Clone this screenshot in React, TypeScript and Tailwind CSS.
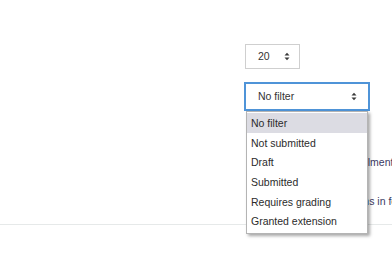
import React from "react";

const options = [
  "No filter",
  "Not submitted",
  "Draft",
  "Submitted",
  "Requires grading",
  "Granted extension",
];

function Arrows() {
  return (
    <svg width="6" height="9" viewBox="0 0 6 9" className="shrink-0">
      <path d="M0.5 3.6L3 0.8L5.5 3.6Z M0.5 5.4L3 8.2L5.5 5.4Z" fill="#3a3a3a" />
    </svg>
  );
}

export default function App() {
  return (
    <div className="relative h-[272px] w-[392px] overflow-hidden bg-white font-['Liberation_Sans',Arial,sans-serif] text-[10.5px] text-[#333]">
      <div className="pl-[245px] pt-[44px]">
        <div className="flex h-[25px] w-[55px] items-center justify-between border border-[#cfcfcf] pl-[12px] pr-[9px]">
          <span>20</span>
          <Arrows />
        </div>
      </div>

      <div className="relative ml-[244px] mt-[13px] w-[126px]">
        <div className="flex h-[29px] items-center justify-between border-2 border-[#4f94d8] pl-[12px] pr-[11px]">
          <span>No filter</span>
          <Arrows />
        </div>
        <ul className="absolute left-[2px] top-[29px] z-10 w-[122px] border border-[#b4b4b4] bg-white pt-[1px] pb-[2px] shadow-[2px_2px_3px_rgba(0,0,0,0.35)]">
          {options.map((o, i) => (
            <li
              key={o}
              className={`flex h-[19.7px] items-center pl-[4px] pt-[2px] text-[#2b2b2b] ${
                i === 0 ? "bg-[#dcdce3]" : ""
              }`}
            >
              {o}
            </li>
          ))}
        </ul>
      </div>

      <div className="mt-[41px] whitespace-nowrap text-[#3b3a63]">
        <div className="ml-[265px] h-[20px] leading-[20px]">Show only active enrolments</div>
        <div className="ml-[267px] mt-[19px] h-[20px] leading-[20px]">Download submissions in folders</div>
      </div>

      <div className="mt-[13px] border-t border-[#e6e9e9]" />
    </div>
  );
}
